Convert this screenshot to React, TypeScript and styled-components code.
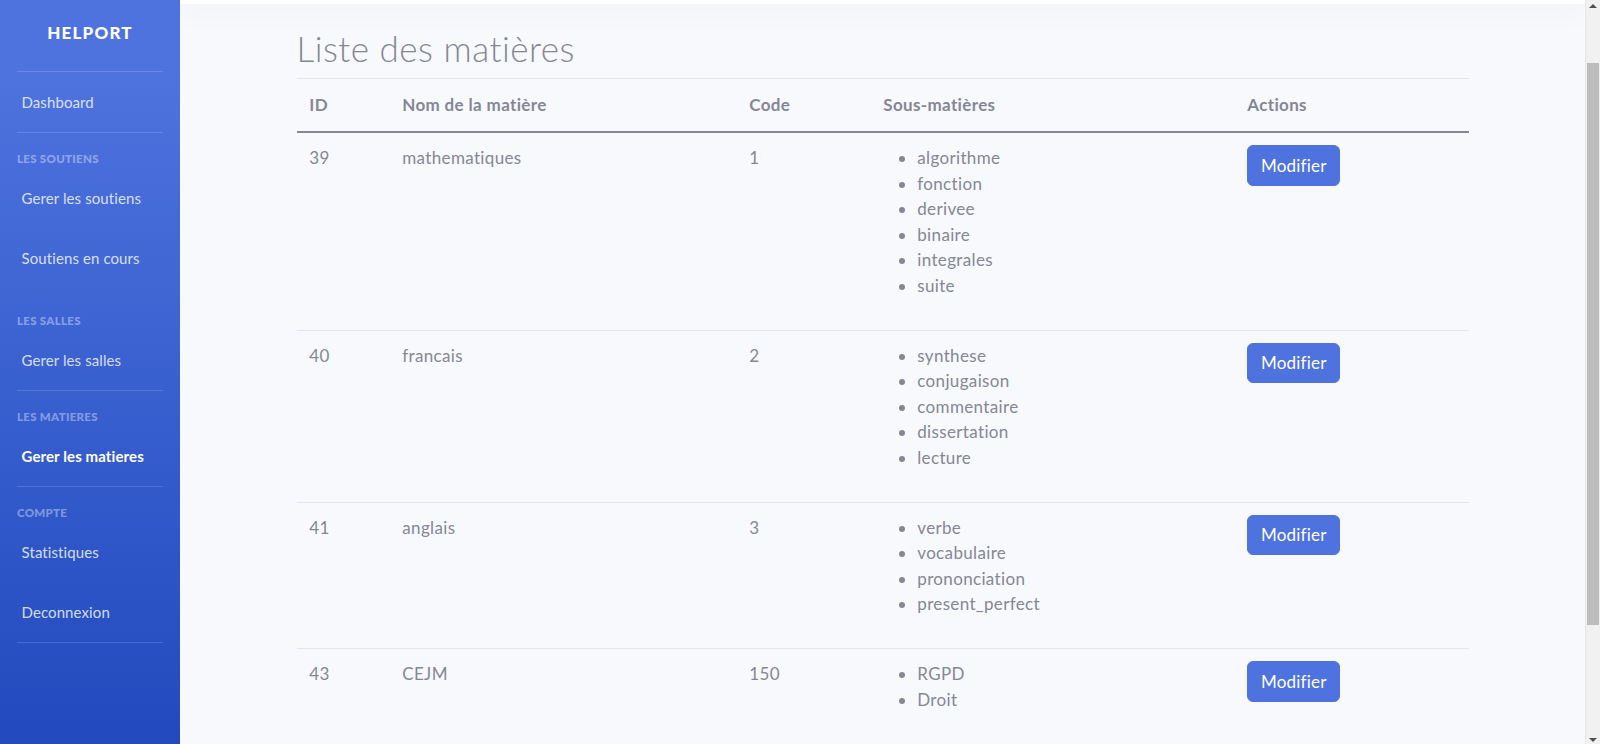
import React from "react";
import styled, { createGlobalStyle } from "styled-components";

const GlobalStyle = createGlobalStyle`
  html, body { margin: 0; padding: 0; }
  body {
    font-family: "Lato", "Noto Sans", sans-serif;
    background: #f8f9fc;
    overflow: hidden;
  }
  * { box-sizing: border-box; }
`;

const Page = styled.div`
  display: flex;
  width: 100vw;
  height: 100vh;
  overflow: hidden;
`;

const Sidebar = styled.nav`
  width: 180px;
  flex: 0 0 180px;
  height: 100%;
  display: flex;
  flex-direction: column;
  background: linear-gradient(180deg, #4e73df 10%, #224abe 100%);
`;

const Brand = styled.div`
  height: 71px;
  padding-bottom: 6px;
  display: flex;
  align-items: center;
  justify-content: center;
  color: #fff;
  font-weight: 900;
  font-size: 17px;
  letter-spacing: 1.2px;
  text-transform: uppercase;
`;

const Divider = styled.hr`
  margin: 0 17px;
  border: 0;
  border-top: 1px solid rgba(255, 255, 255, 0.15);
`;

const NavItem = styled.a<{ $active?: boolean }>`
  height: 60px;
  display: flex;
  align-items: center;
  padding-left: 21.5px;
  font-size: 15px;
  letter-spacing: 0.1px;
  color: ${(p) => (p.$active ? "#fff" : "rgba(255,255,255,0.8)")};
  font-weight: ${(p) => (p.$active ? 700 : 400)};
  text-decoration: none;
  cursor: pointer;
`;

const Heading = styled.div<{ $spaced?: boolean }>`
  padding: ${(p) => (p.$spaced ? "25px" : "18px")} 17px 1px;
  line-height: 16px;
  font-size: 11.5px;
  letter-spacing: 0.3px;
  font-weight: 900;
  text-transform: uppercase;
  color: rgba(255, 255, 255, 0.4);
`;

const ContentWrapper = styled.div`
  flex: 1;
  display: flex;
  flex-direction: column;
  background: #f8f9fc;
  overflow: hidden;
  min-width: 0;
`;

const Topbar = styled.div`
  height: 4px;
  flex: 0 0 4px;
  background: #fff;
  box-shadow: 0 2.5px 29px 0 rgba(58, 59, 69, 0.15);
  position: relative;
  z-index: 1;
`;

const Container = styled.div`
  width: 1172px;
  margin: 0 auto;
  padding-top: 24px;
  color: #858796;
`;

const Title = styled.h1`
  margin: 0 0 9px;
  font-size: 35px;
  line-height: 41px;
  letter-spacing: 0.5px;
  font-weight: 300;
  color: #858796;
`;

const Table = styled.table`
  width: 100%;
  border-collapse: collapse;
  table-layout: fixed;
  font-size: 17px;
  line-height: 25.5px;
  letter-spacing: 0.35px;
  color: #858796;
  border-top: 1px solid #e3e6f0;
`;

const HeadCell = styled.th<{ $w: number }>`
  width: ${(p) => p.$w}px;
  text-align: left;
  font-weight: 700;
  padding: 13.25px 12.75px;
  border-bottom: 2px solid #858796;
`;

const Row = styled.tr`
  border-bottom: 1px solid #e3e6f0;
`;

const Cell = styled.td`
  vertical-align: top;
  padding: 12.25px 12.75px 14.25px;
`;

const SubList = styled.ul`
  margin: 0 0 17px;
  padding-left: 34px;
  list-style: disc;
`;

const Button = styled.button`
  font-family: inherit;
  font-size: 17px;
  line-height: 25.5px;
  letter-spacing: 0.2px;
  padding: 6.375px 12.75px;
  color: #fff;
  background: #4e73df;
  border: 1px solid #4e73df;
  border-radius: 6px;
  cursor: pointer;
`;

const Scrollbar = styled.div`
  width: 15px;
  flex: 0 0 15px;
  height: 100%;
  display: flex;
  flex-direction: column;
  background: #f1f1f1;
  border-left: 1px solid #e8e8e8;
`;

const ScrollArrow = styled.div<{ $dir: "up" | "down" }>`
  height: 17px;
  flex: 0 0 17px;
  display: flex;
  justify-content: center;
  align-items: ${(p) => (p.$dir === "up" ? "flex-start" : "flex-end")};
  padding: ${(p) => (p.$dir === "up" ? "4px 0" : "2px 0")};
  &::after {
    content: "";
    width: 0;
    height: 0;
    border-left: 4px solid transparent;
    border-right: 4px solid transparent;
    ${(p) =>
      p.$dir === "up"
        ? "border-bottom: 4px solid #505050;"
        : "border-top: 4px solid #505050;"}
  }
`;

const ScrollTrack = styled.div`
  flex: 1;
  padding: 46px 1px 0 1px;
`;

const ScrollThumb = styled.div`
  height: 562px;
  background: #bdbdbd;
`;

type Matiere = { id: number; nom: string; code: string; subs: string[] };

const matieres: Matiere[] = [
  {
    id: 39,
    nom: "mathematiques",
    code: "1",
    subs: ["algorithme", "fonction", "derivee", "binaire", "integrales", "suite"],
  },
  {
    id: 40,
    nom: "francais",
    code: "2",
    subs: ["synthese", "conjugaison", "commentaire", "dissertation", "lecture"],
  },
  {
    id: 41,
    nom: "anglais",
    code: "3",
    subs: ["verbe", "vocabulaire", "prononciation", "present_perfect"],
  },
  { id: 43, nom: "CEJM", code: "150", subs: ["RGPD", "Droit"] },
];

export default function App() {
  return (
    <>
      <GlobalStyle />
      <Page>
        <Sidebar>
          <Brand>Helport</Brand>
          <Divider />
          <NavItem>Dashboard</NavItem>
          <Divider />
          <Heading>Les soutiens</Heading>
          <NavItem>Gerer les soutiens</NavItem>
          <NavItem>Soutiens en cours</NavItem>
          <Heading $spaced>Les salles</Heading>
          <NavItem>Gerer les salles</NavItem>
          <Divider />
          <Heading>Les matieres</Heading>
          <NavItem $active>Gerer les matieres</NavItem>
          <Divider />
          <Heading>Compte</Heading>
          <NavItem>Statistiques</NavItem>
          <NavItem>Deconnexion</NavItem>
          <Divider />
        </Sidebar>
        <ContentWrapper>
          <Topbar />
          <Container>
            <Title>Liste des matières</Title>
            <Table>
              <thead>
                <tr>
                  <HeadCell $w={93}>ID</HeadCell>
                  <HeadCell $w={347}>Nom de la matière</HeadCell>
                  <HeadCell $w={134}>Code</HeadCell>
                  <HeadCell $w={364}>Sous-matières</HeadCell>
                  <HeadCell $w={234}>Actions</HeadCell>
                </tr>
              </thead>
              <tbody>
                {matieres.map((m) => (
                  <Row key={m.id}>
                    <Cell>{m.id}</Cell>
                    <Cell>{m.nom}</Cell>
                    <Cell>{m.code}</Cell>
                    <Cell>
                      <SubList>
                        {m.subs.map((s) => (
                          <li key={s}>{s}</li>
                        ))}
                      </SubList>
                    </Cell>
                    <Cell>
                      <Button>Modifier</Button>
                    </Cell>
                  </Row>
                ))}
              </tbody>
            </Table>
          </Container>
        </ContentWrapper>
        <Scrollbar>
          <ScrollArrow $dir="up" />
          <ScrollTrack>
            <ScrollThumb />
          </ScrollTrack>
          <ScrollArrow $dir="down" />
        </Scrollbar>
      </Page>
    </>
  );
}
